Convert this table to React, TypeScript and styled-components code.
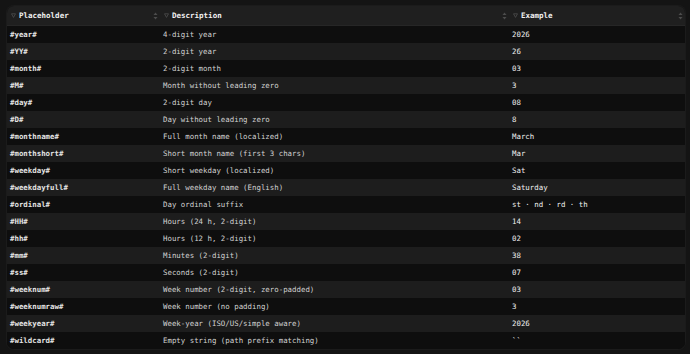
import { Fragment } from "react";
import styled, { createGlobalStyle } from "styled-components";

const GlobalStyle = createGlobalStyle`
  html, body {
    margin: 0;
    padding: 0;
    background: #141414;
  }
  body {
    font-family: "DejaVu Sans Mono", "Liberation Mono", monospace;
  }
`;

const Page = styled.div`
  width: 690px;
  height: 354px;
  padding: 6px 5px 0 7px;
  box-sizing: border-box;
  overflow: hidden;
`;

const Table = styled.div`
  display: grid;
  grid-template-columns: 153px 349px 1fr;
  border-radius: 7px;
  overflow: hidden;
  background: #0e0e0e;
  box-shadow: 0 0 0 1px #1b1b1b;
`;

const HeadCell = styled.div`
  height: 19px;
  display: flex;
  align-items: center;
  padding: 0 2px 0 4px;
  background: #1f1f1f;
  border-bottom: 1px solid #262626;
  color: #f2f2f2;
  font-size: 7.5px;
  font-weight: bold;
`;

const FilterIcon = styled.svg`
  width: 5px;
  height: 5px;
  margin-right: 3px;
  flex: none;
`;

const Label = styled.span`
  flex: 1;
`;

const SortIcon = styled.svg`
  width: 5px;
  height: 8px;
  flex: none;
`;

const Cell = styled.div<{ $odd: boolean; $tone: "key" | "desc" | "ex" }>`
  height: 17px;
  display: flex;
  align-items: center;
  padding: 0 3px;
  background: ${(p) => (p.$odd ? "#1d1d1d" : "#0e0e0e")};
  font-size: 7.4px;
  white-space: nowrap;
  font-weight: ${(p) => (p.$tone === "key" ? "bold" : "normal")};
  color: ${(p) =>
    p.$tone === "key" ? "#e4e4e4" : p.$tone === "desc" ? "#d2d2d2" : "#f0f0f0"};
`;

const Filter = () => (
  <FilterIcon viewBox="0 0 5 5">
    <path d="M0.5 0.8 L4.5 0.8 L2.5 4.4 Z" fill="none" stroke="#4f4f4f" strokeWidth="0.8" />
  </FilterIcon>
);

const Sort = () => (
  <SortIcon viewBox="0 0 5 8">
    <path d="M2.5 0.5 L4.5 3 L0.5 3 Z" fill="#4d4d4d" />
    <path d="M2.5 7.5 L4.5 5 L0.5 5 Z" fill="#4d4d4d" />
  </SortIcon>
);

const rows: [string, string, string][] = [
  ["#year#", "4-digit year", "2026"],
  ["#YY#", "2-digit year", "26"],
  ["#month#", "2-digit month", "03"],
  ["#M#", "Month without leading zero", "3"],
  ["#day#", "2-digit day", "08"],
  ["#D#", "Day without leading zero", "8"],
  ["#monthname#", "Full month name (localized)", "March"],
  ["#monthshort#", "Short month name (first 3 chars)", "Mar"],
  ["#weekday#", "Short weekday (localized)", "Sat"],
  ["#weekdayfull#", "Full weekday name (English)", "Saturday"],
  ["#ordinal#", "Day ordinal suffix", "st · nd · rd · th"],
  ["#HH#", "Hours (24 h, 2-digit)", "14"],
  ["#hh#", "Hours (12 h, 2-digit)", "02"],
  ["#mm#", "Minutes (2-digit)", "38"],
  ["#ss#", "Seconds (2-digit)", "07"],
  ["#weeknum#", "Week number (2-digit, zero-padded)", "03"],
  ["#weeknumraw#", "Week number (no padding)", "3"],
  ["#weekyear#", "Week-year (ISO/US/simple aware)", "2026"],
  ["#wildcard#", "Empty string (path prefix matching)", "``"],
];

const headers = ["Placeholder", "Description", "Example"];

export default function App() {
  return (
    <>
      <GlobalStyle />
      <Page>
        <Table>
          {headers.map((h) => (
            <HeadCell key={h}>
              <Filter />
              <Label>{h}</Label>
              <Sort />
            </HeadCell>
          ))}
          {rows.map((r, i) => (
            <Fragment key={r[0]}>
              <Cell $odd={i % 2 === 1} $tone="key">{r[0]}</Cell>
              <Cell $odd={i % 2 === 1} $tone="desc">{r[1]}</Cell>
              <Cell $odd={i % 2 === 1} $tone="ex">{r[2]}</Cell>
            </Fragment>
          ))}
        </Table>
      </Page>
    </>
  );
}
